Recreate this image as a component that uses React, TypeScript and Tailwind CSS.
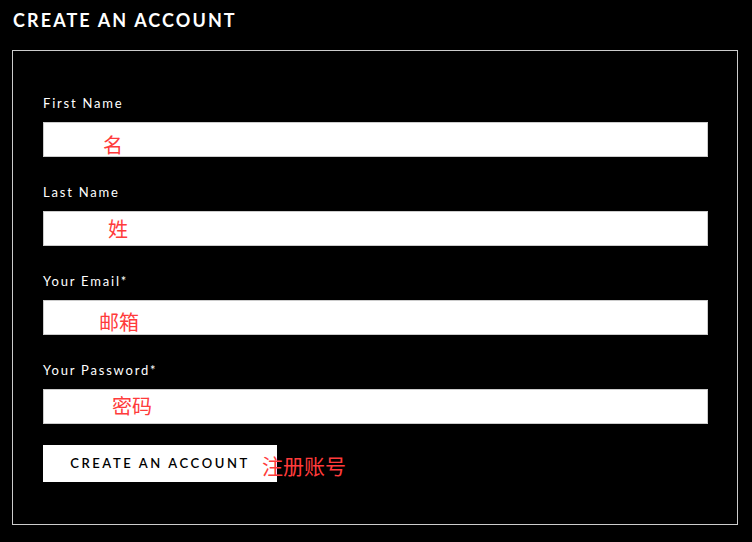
const fields = [
  { label: 'First Name', note: '名', pad: 'pl-[59px] pt-[11px]' },
  { label: 'Last Name', note: '姓', pad: 'pl-[64px] pt-[6px]' },
  { label: 'Your Email*', note: '邮箱', pad: 'pl-[55px] pt-[10px]' },
  { label: 'Your Password*', note: '密码', pad: 'pl-[68px] pt-[5px]' },
];

export default function App() {
  return (
    <div className="w-[752px] h-[542px] bg-black pt-[9px] pl-[12px] pr-[14px] font-['Lato',sans-serif]">
      <h1 className="pl-px text-[18px] leading-[22px] font-bold tracking-[2.1px] text-white">CREATE AN ACCOUNT</h1>

      <div className="mt-[19px] border border-[#cccccc] pl-[30px] pr-[29px] pt-[44px] pb-[42px]">
        {fields.map((f, i) => (
          <div key={f.label} className={i > 0 ? 'mt-[27px]' : ''}>
            <label className="block text-[13px] leading-[16px] tracking-[1.8px] text-white">{f.label}</label>
            <div
              className={`mt-[11px] h-[35px] border border-[#cccccc] bg-white ${f.pad} text-[20px] leading-[21px] text-[#ff3b3b] font-['Noto_Sans_CJK_SC',sans-serif]`}
            >
              {f.note}
            </div>
          </div>
        ))}

        <div className="mt-[21px] flex items-center">
          <button className="h-[37px] w-[234px] bg-white text-[13px] font-semibold tracking-[2.6px] text-black">
            CREATE AN ACCOUNT
          </button>
          <span className="relative -ml-[15px] mt-[2px] text-[21px] leading-[22px] text-[#ff3b3b] font-['Noto_Sans_CJK_SC',sans-serif]">
            注册账号
          </span>
        </div>
      </div>
    </div>
  );
}
